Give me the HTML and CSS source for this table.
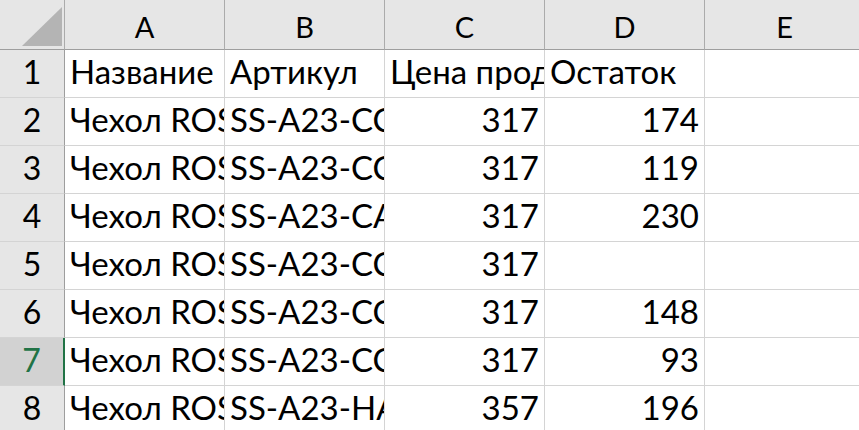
FILE: index.html
```html
<!DOCTYPE html>
<html lang="ru">
<head>
    <meta charset="UTF-8">
    <title>Книга1 - Excel</title>
    <link rel="stylesheet" href="styles.css">
</head>
<body>
    <div class="sheet">
        <div class="corner">
            <svg width="40" height="39" viewBox="0 0 40 39"><polygon points="0,39 40,39 40,0" fill="#b4b4b4"/></svg>
        </div>
        <div class="col-head">A</div>
        <div class="col-head">B</div>
        <div class="col-head">C</div>
        <div class="col-head">D</div>
        <div class="col-head">E</div>

        <div class="row-head">1</div>
        <div class="cell">Название</div>
        <div class="cell">Артикул</div>
        <div class="cell">Цена продажи</div>
        <div class="cell">Остаток</div>
        <div class="cell"></div>

        <div class="row-head">2</div>
        <div class="cell">Чехол ROSSO</div>
        <div class="cell">SS-A23-CCSM</div>
        <div class="cell num">317</div>
        <div class="cell num">174</div>
        <div class="cell"></div>

        <div class="row-head">3</div>
        <div class="cell">Чехол ROSSO</div>
        <div class="cell">SS-A23-CCSM</div>
        <div class="cell num">317</div>
        <div class="cell num">119</div>
        <div class="cell"></div>

        <div class="row-head">4</div>
        <div class="cell">Чехол ROSSO</div>
        <div class="cell">SS-A23-CARD</div>
        <div class="cell num">317</div>
        <div class="cell num">230</div>
        <div class="cell"></div>

        <div class="row-head">5</div>
        <div class="cell">Чехол ROSSO</div>
        <div class="cell">SS-A23-CCSM</div>
        <div class="cell num">317</div>
        <div class="cell num"></div>
        <div class="cell"></div>

        <div class="row-head">6</div>
        <div class="cell">Чехол ROSSO</div>
        <div class="cell">SS-A23-CCSM</div>
        <div class="cell num">317</div>
        <div class="cell num">148</div>
        <div class="cell"></div>

        <div class="row-head selected">7</div>
        <div class="cell">Чехол ROSSO</div>
        <div class="cell">SS-A23-CCSM</div>
        <div class="cell num">317</div>
        <div class="cell num">93</div>
        <div class="cell"></div>

        <div class="row-head">8</div>
        <div class="cell">Чехол ROSSO</div>
        <div class="cell">SS-A23-HARD</div>
        <div class="cell num">357</div>
        <div class="cell num">196</div>
        <div class="cell"></div>
    </div>
</body>
</html>
```

FILE: styles.css
```css
body, html {
    margin: 0;
    padding: 0;
    background-color: #fff;
    overflow: hidden;
}

.sheet {
    display: grid;
    grid-template-columns: 65px repeat(5, 160px);
    grid-template-rows: 50px repeat(8, 48px);
    font-family: 'Lato', 'Liberation Sans', sans-serif;
    color: #000;
}

.corner {
    background-color: #e6e6e6;
    border-right: 1px solid #ababab;
    border-bottom: 1px solid #9e9e9e;
    display: flex;
    justify-content: flex-end;
    align-items: flex-end;
    padding: 0 2px 3px 0;
}

.corner svg {
    display: block;
}

.col-head {
    background-color: #e6e6e6;
    border-right: 1px solid #ababab;
    border-bottom: 1px solid #9e9e9e;
    font-size: 29px;
    display: flex;
    justify-content: center;
    align-items: flex-end;
    padding-bottom: 5px;
}

.row-head {
    background-color: #e6e6e6;
    border-right: 1px solid #9e9e9e;
    border-bottom: 1px solid #d4d4d4;
    font-size: 32px;
    display: flex;
    justify-content: center;
    align-items: flex-end;
    padding-bottom: 6px;
}

.row-head.selected {
    background-color: #d2d2d2;
    color: #217346;
    border-right: 2px solid #217346;
}

.cell {
    border-right: 1px solid #d4d4d4;
    border-bottom: 1px solid #d4d4d4;
    font-size: 33px;
    white-space: nowrap;
    overflow: hidden;
    display: flex;
    align-items: flex-end;
    padding: 0 5px 6px 5px;
}

.cell.num {
    justify-content: flex-end;
}
```
